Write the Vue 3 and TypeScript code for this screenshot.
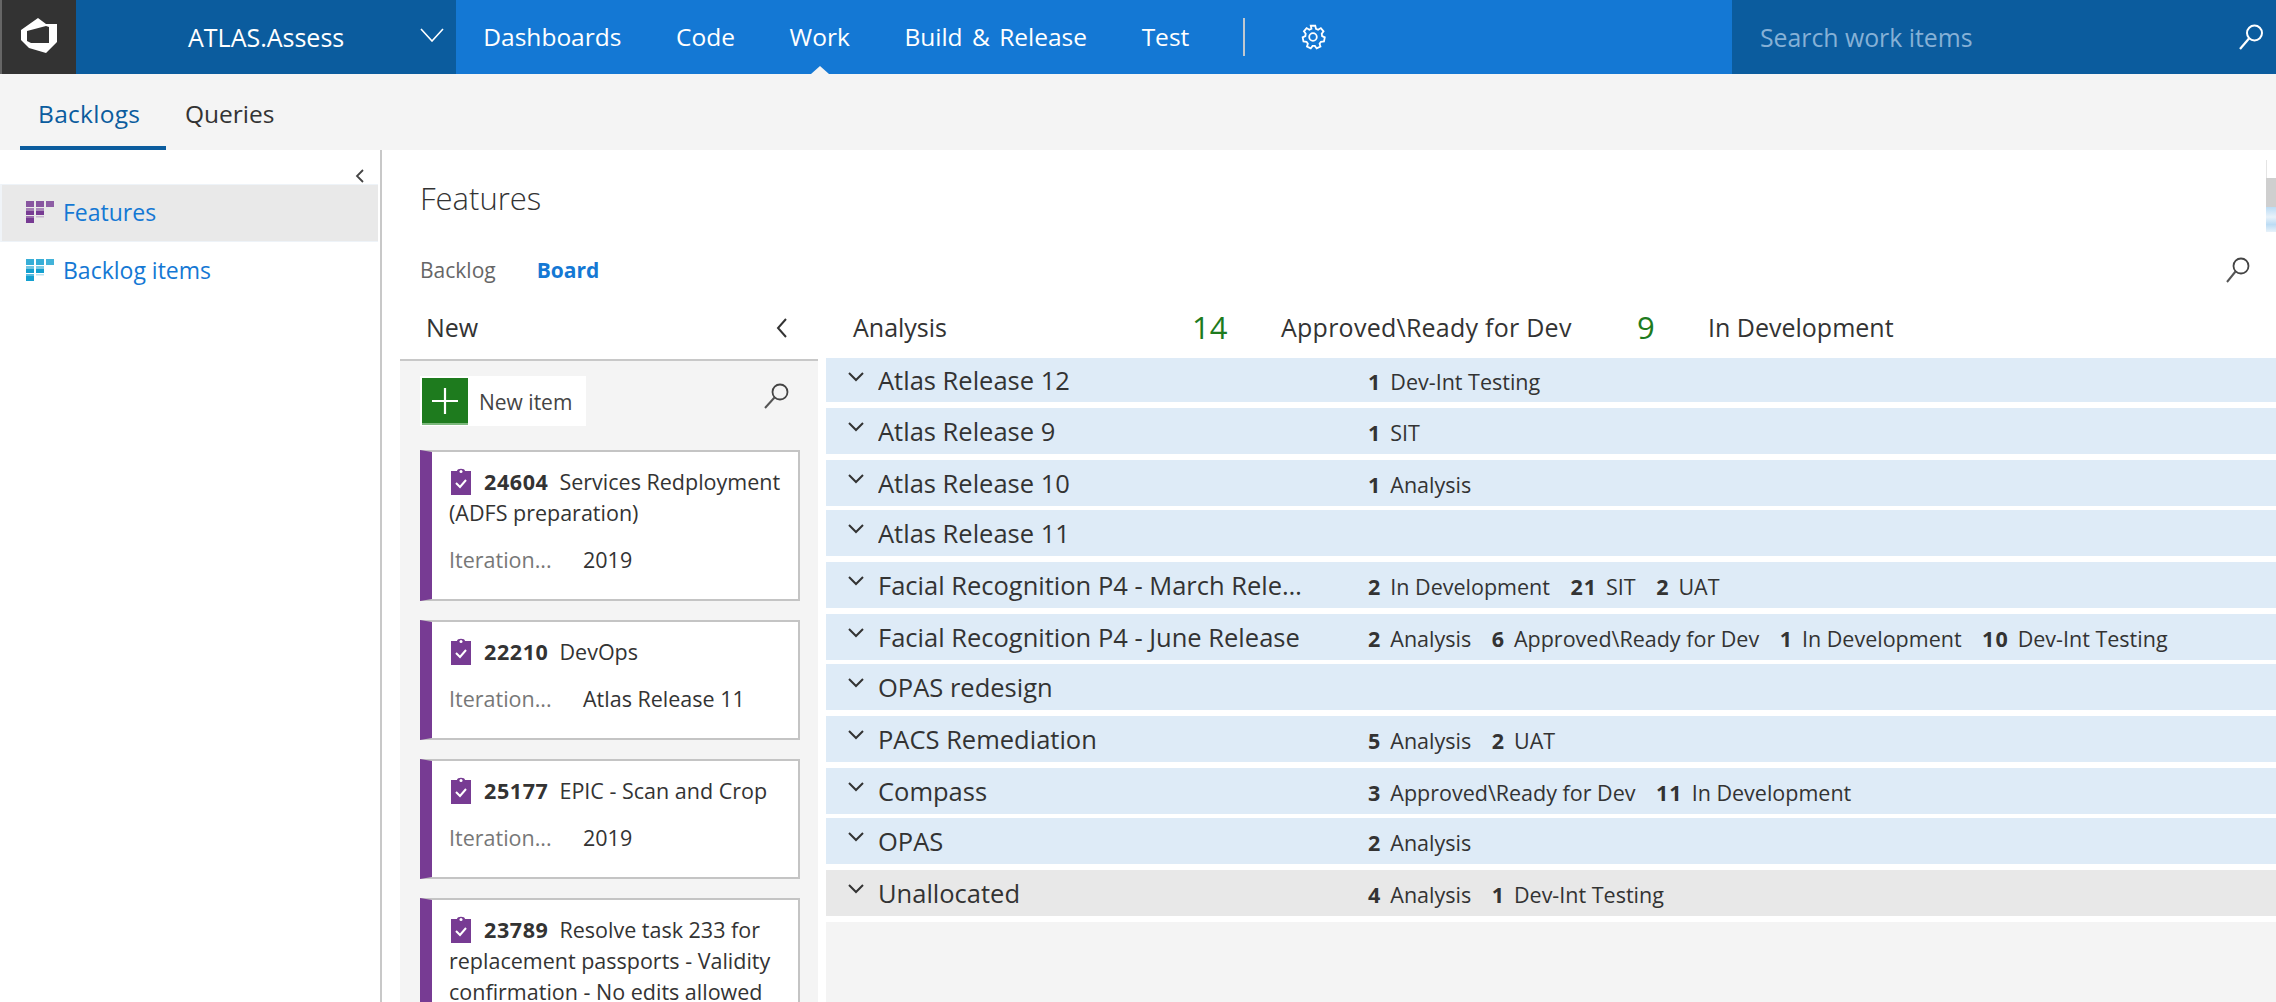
<script setup lang="ts">
interface Count { n: number; label: string }
interface Lane { name: string; counts: Count[]; grey?: boolean }
interface Card { id: number; title: string; iter: string }

const navItems: string[] = ['Dashboards', 'Code', 'Work', 'Build & Release', 'Test']
const cards: Card[] = [
  { id: 24604, title: 'Services Redployment (ADFS preparation)', iter: '2019' },
  { id: 22210, title: 'DevOps', iter: 'Atlas Release 11' },
  { id: 25177, title: 'EPIC - Scan and Crop', iter: '2019' },
  { id: 23789, title: 'Resolve task 233 for replacement passports - Validity confirmation - No edits allowed', iter: '2019' },
]
const lanes: Lane[] = [
  { name: 'Atlas Release 12', counts: [{ n: 1, label: 'Dev-Int Testing' }] },
  { name: 'Atlas Release 9', counts: [{ n: 1, label: 'SIT' }] },
  { name: 'Atlas Release 10', counts: [{ n: 1, label: 'Analysis' }] },
  { name: 'Atlas Release 11', counts: [] },
  { name: 'Facial Recognition P4 - March Release', counts: [{ n: 2, label: 'In Development' }, { n: 21, label: 'SIT' }, { n: 2, label: 'UAT' }] },
  { name: 'Facial Recognition P4 - June Release', counts: [{ n: 2, label: 'Analysis' }, { n: 6, label: 'Approved\\Ready for Dev' }, { n: 1, label: 'In Development' }, { n: 10, label: 'Dev-Int Testing' }] },
  { name: 'OPAS redesign', counts: [] },
  { name: 'PACS Remediation', counts: [{ n: 5, label: 'Analysis' }, { n: 2, label: 'UAT' }] },
  { name: 'Compass', counts: [{ n: 3, label: 'Approved\\Ready for Dev' }, { n: 11, label: 'In Development' }] },
  { name: 'OPAS', counts: [{ n: 2, label: 'Analysis' }] },
  { name: 'Unallocated', counts: [{ n: 4, label: 'Analysis' }, { n: 1, label: 'Dev-Int Testing' }], grey: true },
]
</script>

<template>
  <div class="page">
    <header class="top">
      <div class="logo">
        <svg width="36" height="36" viewBox="0 0 36 36">
          <path d="M0 12 L17 0 L25 6 L36 6 V24 L25 35 L8 30 L0 22 Z M6 13 V23 L10 25 H28 V9 L25 8 Z" fill="#fff" fill-rule="evenodd" />
        </svg>
      </div>
      <div class="project">
        <span class="project-name">ATLAS.Assess</span>
        <svg class="project-chev" width="24" height="14" viewBox="0 0 24 14"><path d="M1 1 L12 13 L23 1" fill="none" stroke="#fff" stroke-width="1.6" /></svg>
      </div>
      <nav class="nav">
        <a v-for="item in navItems" :key="item" class="nav-item" :class="{ current: item === 'Work' }">{{ item }}</a>
        <span class="nav-sep"></span>
        <svg class="gear" width="28" height="28" viewBox="0 0 28 28">
          <path d="M11.5 1.500h5l.8 3.400 2.400 1 3-1.800 3 3.600-2 2.700.4 2.600 3 1.400-.9 4.600-3.400.3-1.500 2.200 1 3.200-4.200 2-2-2.800h-2.600l-2 2.800-4.200-2 1-3.200-1.500-2.200-3.400-.3-.9-4.600 3-1.400.4-2.600-2-2.700 3-3.600 3 1.800 2.400-1z" fill="none" stroke="#fff" stroke-width="2" transform="translate(1.400 1.400) scale(.9)" />
          <circle cx="14" cy="14" r="3.800" fill="none" stroke="#fff" stroke-width="1.800" />
        </svg>
      </nav>
      <div class="search">
        <span class="search-text">Search work items</span>
        <svg width="30" height="30" viewBox="0 0 30 30" class="search-icon"><circle cx="18.500" cy="11" r="7.500" fill="none" stroke="#fff" stroke-width="2" /><path d="M13 16.500 L4 27" stroke="#fff" stroke-width="2.200" /></svg>
      </div>
    </header>

    <div class="subnav">
      <a class="subtab active">Backlogs</a>
      <a class="subtab">Queries</a>
    </div>

    <div class="body">
      <aside class="side">
        <div class="side-collapse">
          <svg width="10" height="16" viewBox="0 0 10 16"><path d="M8 2 L2 8 L8 14" fill="none" stroke="#444" stroke-width="1.800" /></svg>
        </div>
        <div class="side-item selected">
          <svg class="bl-icon" width="28" height="22" viewBox="0 0 28 22" fill="#773b93">
            <rect x="0" y="0" width="8" height="6" opacity=".85" /><rect x="0" y="7" width="8" height="3" opacity=".6" /><rect x="0" y="10" width="8" height="4" /><rect x="0" y="15" width="8" height="2" opacity=".7" /><rect x="0" y="17" width="8" height="5" />
            <rect x="10" y="0" width="8" height="6" opacity=".85" /><rect x="10" y="7" width="8" height="3" opacity=".55" /><rect x="10" y="10" width="8" height="4" /><rect x="10" y="15" width="8" height="1.500" opacity=".3" />
            <rect x="20" y="0" width="8" height="6" opacity=".8" />
          </svg>
          <span>Features</span>
        </div>
        <div class="side-item">
          <svg class="bl-icon" width="28" height="22" viewBox="0 0 28 22" fill="#14a0d0">
            <rect x="0" y="0" width="8" height="6" opacity=".85" /><rect x="0" y="7" width="8" height="3" opacity=".6" /><rect x="0" y="10" width="8" height="4" /><rect x="0" y="15" width="8" height="2" opacity=".7" /><rect x="0" y="17" width="8" height="5" />
            <rect x="10" y="0" width="8" height="6" opacity=".85" /><rect x="10" y="7" width="8" height="3" opacity=".55" /><rect x="10" y="10" width="8" height="4" /><rect x="10" y="15" width="8" height="1.500" opacity=".3" />
            <rect x="20" y="0" width="8" height="6" opacity=".8" />
          </svg>
          <span>Backlog items</span>
        </div>
      </aside>

      <main class="content">
        <h1 class="title">Features</h1>
        <div class="views">
          <a class="view">Backlog</a>
          <a class="view on">Board</a>
          <svg class="views-search" width="30" height="30" viewBox="0 0 30 30"><circle cx="18" cy="11" r="7.500" fill="none" stroke="#444" stroke-width="1.800" /><path d="M12.500 16.500 L4 27" stroke="#555" stroke-width="2" /></svg>
        </div>

        <div class="board">
          <section class="col-new">
            <div class="col-new-head">
              <span>New</span>
              <svg width="14" height="22" viewBox="0 0 14 22"><path d="M11 2 L3 11 L11 20" fill="none" stroke="#333" stroke-width="2" /></svg>
            </div>
            <div class="col-new-body">
              <div class="tools">
                <button class="new-item">
                  <span class="plus"><svg width="28" height="28" viewBox="0 0 28 28"><path d="M14 1 V27 M1 14 H27" stroke="#fff" stroke-width="2.200" /></svg></span>
                  <span class="new-label">New item</span>
                </button>
                <svg width="30" height="30" viewBox="0 0 30 30"><circle cx="18" cy="11" r="7.500" fill="none" stroke="#444" stroke-width="1.800" /><path d="M12.500 16.500 L3 27" stroke="#555" stroke-width="2" /></svg>
              </div>
              <article v-for="c in cards" :key="c.id" class="card">
                <div class="card-title">
                  <svg class="clip" width="20" height="27" viewBox="0 0 20 27">
                    <path d="M0 3 H6 C6 0 14 0 14 3 H20 V27 H0 Z" fill="#773b93" />
                    <circle cx="10" cy="3.500" r="1.500" fill="#fff" />
                    <path d="M5 15 L9 19 L15 12" fill="none" stroke="#fff" stroke-width="2" />
                  </svg>
                  <b class="card-id">{{ c.id }}</b><span>{{ c.title }}</span>
                </div>
                <div class="card-field">
                  <span class="field-name">Iteration...</span>
                  <span class="field-value">{{ c.iter }}</span>
                </div>
              </article>
            </div>
          </section>

          <section class="col-rest">
            <div class="heads">
              <span class="head h-analysis">Analysis</span>
              <span class="head-num n-14">14</span>
              <span class="head h-approved">Approved\Ready for Dev</span>
              <span class="head-num n-9">9</span>
              <span class="head">In Development</span>
            </div>
            <div class="lanes">
              <div v-for="l in lanes" :key="l.name" class="lane" :class="{ grey: l.grey }">
                <svg class="lane-chev" width="18" height="12" viewBox="0 0 18 12"><path d="M2 2 L9 9 L16 2" fill="none" stroke="#333" stroke-width="2" /></svg>
                <span class="lane-name">{{ l.name }}</span>
                <div class="lane-counts">
                  <span v-for="c in l.counts" :key="c.label" class="count"><b>{{ c.n }}</b>{{ c.label }}</span>
                </div>
              </div>
            </div>
            <div class="rest-fill"></div>
          </section>
        </div>
      </main>
      <div class="mini"><i class="m1"></i><i class="m2"></i><i class="m3"></i></div>
    </div>
  </div>
</template>

<style>
html, body { margin: 0; overflow: hidden; background: #fff; }
</style>

<style scoped>
.page {
  width: 2276px; height: 1002px; overflow: hidden; display: flex; flex-direction: column;
  font-family: "Open Sans", "Noto Sans", sans-serif; color: #333;
}
.top { height: 74px; display: flex; flex: none; color: #fff; font-size: 24.5px; }
.logo { width: 76px; background: #333; display: flex; align-items: center; justify-content: center; flex: none; border-left: 2px solid #666; box-sizing: border-box; padding-bottom: 3px; }
.project { width: 380px; background: #0b5c9e; flex: none; display: flex; align-items: center; position: relative; padding-left: 112px; box-sizing: border-box; font-size: 25px; }
.project-chev { position: absolute; left: 344px; top: 28px; }
.nav { flex: 1; background: #1478d4; display: flex; align-items: center; word-spacing: 3px; }
.nav-item { padding: 0 27.3px; line-height: 74px; position: relative; }
.nav-item.current::after {
  content: ""; position: absolute; left: 50%; margin-left: -9px; bottom: 0; width: 0; height: 0;
  border-left: 9px solid transparent; border-right: 9px solid transparent; border-bottom: 8px solid #f4f4f4;
}
.nav-sep { width: 2px; height: 38px; background: #c0c8d0; margin-left: 26px; }
.gear { margin-left: 54px; }
.search { width: 544px; flex: none; background: #0b5c9e; display: flex; align-items: center; justify-content: space-between; padding: 0 10px 0 28px; box-sizing: border-box; font-size: 24.8px; }
.search-text { color: #86b1d6; }
.subnav { height: 76px; flex: none; background: #f4f4f4; display: flex; padding-left: 20px; font-size: 24.5px; box-sizing: border-box; }
.subtab { height: 76px; line-height: 80px; box-sizing: border-box; }
.subtab.active { color: #0b5c9e; border-bottom: 4px solid #0b5c9e; width: 146px; padding: 0 18px; letter-spacing: 0.3px; }
.subtab + .subtab { padding-left: 19px; }
.body { flex: 1; display: flex; position: relative; min-height: 0; }
.side { width: 382px; flex: none; border-right: 2px solid #c8c8c8; box-sizing: border-box; padding-top: 34px; position: relative; font-size: 23px; color: #1478d4; }
.side-collapse { position: absolute; right: 15px; top: 9px; }
.side-item { height: 58px; display: flex; align-items: center; gap: 9px; padding-left: 26px; box-sizing: border-box; }
.side-item span { padding-bottom: 3px; }
.side-item .bl-icon { margin-bottom: 3px; }
.side-item.selected { background: #e9e9e9; margin: 0 2px 0 0; border: 1px solid #eef3f8; border-width: 1px 0; border-left: 2px solid #f0f4f8; padding-left: 24px; }
.content { flex: 1; min-width: 0; display: flex; flex-direction: column; }
.title { margin: 30px 0 0 38px; font-size: 31px; line-height: 36px; font-weight: 300; color: #333; }
.views { margin: 42px 0 0 38px; height: 24px; display: flex; align-items: center; font-size: 21px; position: relative; }
.view { color: #666; margin-right: 41px; }
.view.on { color: #1478d4; font-weight: 700; }
.views-search { position: absolute; right: 23px; top: -3px; }
.board { margin-top: 24px; margin-left: 18px; flex: 1; min-height: 0; display: flex; gap: 8px; }
.col-new { width: 418px; flex: none; display: flex; flex-direction: column; }
.col-new-head { height: 53px; flex: none; display: flex; align-items: center; justify-content: space-between; padding: 0 29px 12px 26px; font-size: 25px; box-sizing: border-box; }
.col-new-head svg { margin-top: 2px; }
.col-new-body { flex: 1; background: #f4f4f4; border-top: 2px solid #c8c8c8; padding: 15px 18px 0 20px; overflow: hidden; }
.tools { display: flex; align-items: flex-start; justify-content: space-between; padding-right: 8px; height: 74px; }
.tools svg { margin-top: 5px; }
.new-item { width: 166px; height: 50px; background: #fff; border: 0; padding: 2px; display: flex; align-items: flex-start; font: inherit; color: #333; font-size: 21px; }
.plus { width: 46px; height: 45px; background: #1e7b1e; border-bottom: 2px solid #7db87d; display: flex; align-items: center; justify-content: center; flex: none; }
.tools .plus svg { margin: 0; }
.new-label { margin-left: 11px; line-height: 48px; color: #444; }
.card { background: #fff; border: 2px solid #c4c4c4; border-left: 12px solid #773b93; margin-bottom: 19px; padding: 14px 6px 24px 17px; box-sizing: border-box; font-size: 21.5px; line-height: 31px; min-height: 119px; }
.card-title { color: #333; }
.clip { vertical-align: -5px; margin: 0 13px 0 2px; }
.card-id { font-weight: 700; margin-right: 11px; letter-spacing: 0.6px; }
.card-field { display: flex; margin-top: 16px; }
.field-name { width: 134px; color: #777; flex: none; }
.lanes { display: flex; flex-direction: column; }
.col-rest { flex: 1; min-width: 0; display: flex; flex-direction: column; }
.heads { height: 52px; flex: none; display: flex; align-items: center; font-size: 25px; padding: 0 0 10px 27px; box-sizing: border-box; }
.head-num { color: #1e7b1e; font-size: 31px; }
.h-analysis { width: 339px; }
.n-14 { width: 89px; }
.h-approved { width: 356px; letter-spacing: 0.25px; }
.n-9 { width: 71px; }
.lane { height: 46px; background: #deebf7; flex: none; margin-top: 6px; display: flex; align-items: center; position: relative; padding-left: 52px; box-sizing: border-box; font-size: 25.5px; }
.lane:first-child { height: 44px; margin-top: 0; }
.lane:nth-child(4), .lane:nth-child(7), .lane:nth-child(10) { margin-top: 4px; }
.lane.grey { background: #e8e8e8; }
.lane-chev { position: absolute; left: 21px; top: 13px; }
.lane-name { width: 490px; flex: none; white-space: nowrap; overflow: hidden; text-overflow: ellipsis; padding-bottom: 1px; box-sizing: border-box; padding-right: 60px; }
.lane-counts { display: flex; gap: 20.5px; font-size: 21.5px; padding-top: 3px; }
.count b { margin-right: 9px; font-weight: 700; letter-spacing: 1px; }
.rest-fill { flex: 1; background: #f4f4f4; margin-top: 6px; }
.mini { position: absolute; right: 0; top: 10px; width: 10px; height: 72px; display: flex; flex-direction: column; }
.mini i { display: block; }
.m1 { height: 18px; background: #fff; border-left: 1px solid #e4e4e4; }
.m2 { height: 29px; background: #cfcfcf; }
.m3 { height: 25px; background: linear-gradient(#bcdcf4, #e8f2fa 40%, #bcdcf4 70%, #e8f2fa); }
</style>
